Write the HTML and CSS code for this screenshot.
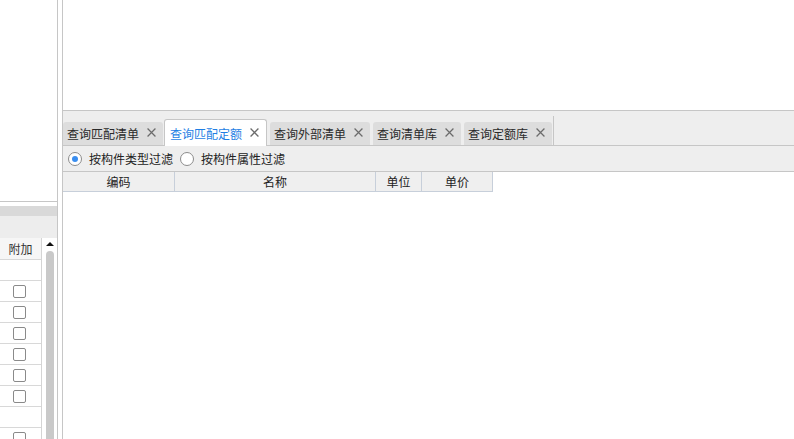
FILE: index.html
```html
<!DOCTYPE html>
<html lang="zh-CN">
<head>
<meta charset="utf-8">
<title>查询匹配定额</title>
<link rel="stylesheet" href="styles.css">
</head>
<body>
<div class="app">
  <aside class="left">
    <div class="left-top"></div>
    <div class="left-gap"></div>
    <div class="band-dark"></div>
    <div class="band-light"></div>
    <div class="left-table">
      <div class="col-extra">
        <div class="cell head">附加</div>
        <div class="cell"></div>
        <div class="cell"><span class="chk"></span></div>
        <div class="cell"><span class="chk"></span></div>
        <div class="cell"><span class="chk"></span></div>
        <div class="cell"><span class="chk"></span></div>
        <div class="cell"><span class="chk"></span></div>
        <div class="cell"><span class="chk"></span></div>
        <div class="cell"></div>
        <div class="cell"><span class="chk"></span></div>
      </div>
      <div class="vscroll">
        <span class="arrow-up"></span>
        <span class="thumb"></span>
      </div>
    </div>
  </aside>
  <div class="spacer"></div>
  <main class="right">
    <div class="right-top"></div>
    <div class="tabbar">
      <div class="tab">查询匹配清单<svg class="x" viewBox="0 0 8 8"><path d="M0.5 0.5L7.5 7.5M7.5 0.5L0.5 7.5"/></svg></div>
      <div class="tab active">查询匹配定额<svg class="x" viewBox="0 0 8 8"><path d="M0.5 0.5L7.5 7.5M7.5 0.5L0.5 7.5"/></svg></div>
      <div class="tab">查询外部清单<svg class="x" viewBox="0 0 8 8"><path d="M0.5 0.5L7.5 7.5M7.5 0.5L0.5 7.5"/></svg></div>
      <div class="tab">查询清单库<svg class="x" viewBox="0 0 8 8"><path d="M0.5 0.5L7.5 7.5M7.5 0.5L0.5 7.5"/></svg></div>
      <div class="tab">查询定额库<svg class="x" viewBox="0 0 8 8"><path d="M0.5 0.5L7.5 7.5M7.5 0.5L0.5 7.5"/></svg></div>
      <div class="tab-sep"></div>
    </div>
    <div class="filter">
      <label class="radio"><span class="dot on"></span>按构件类型过滤</label>
      <label class="radio"><span class="dot"></span>按构件属性过滤</label>
    </div>
    <div class="grid-head">
      <div class="th c1">编码</div>
      <div class="th c2">名称</div>
      <div class="th c3">单位</div>
      <div class="th c4">单价</div>
    </div>
  </main>
</div>
</body>
</html>
```

FILE: styles.css
```css
* { box-sizing: border-box; }
html, body { margin: 0; padding: 0; }
body {
  width: 794px;
  height: 439px;
  overflow: hidden;
  background: #fff;
  font-family: "Noto Sans CJK SC", "Microsoft YaHei", sans-serif;
  font-size: 12px;
  color: #222;
}
.app { display: flex; height: 439px; }

/* left pane */
.left {
  width: 58px;
  border-right: 1px solid #c6c6c6;
  display: flex;
  flex-direction: column;
  overflow: hidden;
}
.left > * { flex-shrink: 0; }
.left-top { height: 202px; border-bottom: 1px solid #c6c6c6; }
.left-gap { height: 4px; }
.band-dark { height: 10px; background: #d9d9d9; }
.band-light { height: 22px; background: #ededed; }
.left .left-table { flex: 1 1 0; min-height: 0; display: flex; overflow: hidden; }
.col-extra { width: 42px; border-right: 1px solid #d4d4d4; }
.cell {
  height: 21px;
  border-bottom: 1px solid #d8d8d8;
  display: flex;
  align-items: center;
  padding-left: 13px;
}
.cell.head {
  height: 22px;
  padding-left: 0;
  justify-content: center;
  background: #f6f6f6;
  color: #333;
}
.chk {
  width: 13px;
  height: 13px;
  border: 1px solid #8a8a8a;
  border-radius: 2px;
  background: #fff;
}
.vscroll {
  flex: 1;
  display: flex;
  flex-direction: column;
  align-items: center;
  padding-top: 4px;
}
.arrow-up {
  flex-shrink: 0;
  width: 0; height: 0;
  border-left: 4px solid transparent;
  border-right: 4px solid transparent;
  border-bottom: 4px solid #111;
}
.thumb {
  margin-top: 5px;
  width: 8px;
  flex: 1;
  background: #c9c9c9;
  border-radius: 4px 4px 0 0;
}

.spacer { width: 4px; }

/* right pane */
.right {
  flex: 1;
  border-left: 1px solid #c6c6c6;
  display: flex;
  flex-direction: column;
}
.right > * { flex-shrink: 0; }
.right-top { height: 111px; border-bottom: 1px solid #c6c6c6; }
.tabbar {
  height: 35px;
  background: #eeeeee;
  border-bottom: 1px solid #c6c6c6;
  display: flex;
  align-items: flex-end;
}
.tab {
  height: 23px;
  display: flex;
  align-items: center;
  gap: 8px;
  padding: 0 7px 0 4px;
  background: #dddddd;
  border-radius: 3px 3px 0 0;
  color: #2a2a2a;
  margin-right: 3px;
  white-space: nowrap;
}
.tab .x {
  width: 9px;
  height: 9px;
  margin-top: -2px;
  fill: none;
  stroke: #6b6b6b;
  stroke-width: 1.1;
}
.tab.active {
  height: 27px;
  margin-bottom: -1px;
  padding: 1px 7px 0 5px;
  background: #fff;
  border: 1px solid #c6c6c6;
  border-bottom: none;
  color: #1f7fe4;
  margin-left: -2px;
  margin-right: 3px;
}
.tab:first-child { margin-right: 3px; }
.tab-sep {
  width: 1px;
  height: 29px;
  background: #c6c6c6;
  margin-left: -2px;
}
.filter {
  height: 26px;
  background: #eeeeee;
  border-bottom: 1px solid #c6c6c6;
  display: flex;
  align-items: center;
  padding-left: 5px;
  gap: 7px;
}
.radio { display: flex; align-items: center; gap: 7px; }
.dot {
  width: 14px;
  height: 14px;
  border: 1px solid #8c8c8c;
  border-radius: 50%;
  background: #fff;
  display: flex;
  align-items: center;
  justify-content: center;
}
.dot.on::after {
  content: "";
  width: 6px;
  height: 6px;
  border-radius: 50%;
  background: #3a8ef0;
}
.grid-head {
  display: flex;
  height: 20px;
}
.th {
  background: #efefef;
  border-right: 1px solid #c7cfda;
  border-bottom: 1px solid #c7cfda;
  display: flex;
  align-items: center;
  justify-content: center;
}
.c1 { width: 112px; }
.c2 { width: 201px; }
.c3 { width: 46px; }
.c4 { width: 71px; }
```
